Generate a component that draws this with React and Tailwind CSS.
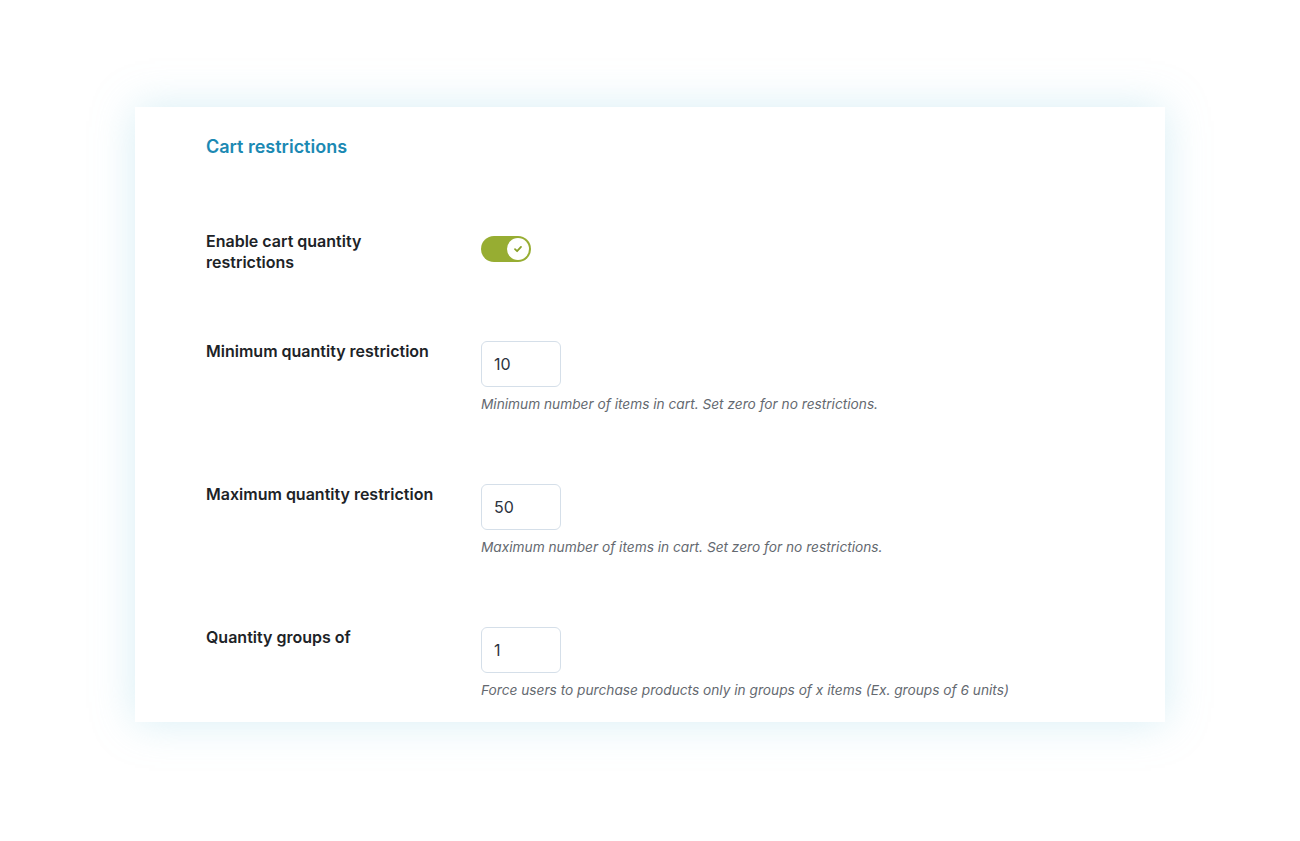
import React from "react";

function Toggle() {
  return (
    <div className="relative mt-[5px] h-[26px] w-[50px] rounded-full bg-[#97ad32]">
      <div className="absolute right-[2px] top-[2px] flex h-[22px] w-[22px] items-center justify-center rounded-full bg-white">
        <svg width="10" height="10" viewBox="0 0 10 10" fill="none">
          <path d="M2 5.2 L4.1 7.2 L8 2.9" stroke="#8aa12a" strokeWidth="1.8" strokeLinecap="round" strokeLinejoin="round" />
        </svg>
      </div>
    </div>
  );
}

function NumberRow({ label, value, help, className }) {
  return (
    <div className={"grid grid-cols-[275px_1fr] " + className}>
      <div className="text-[16px] font-semibold leading-[21px] text-[#1d2327]">{label}</div>
      <div className="flex flex-col items-start">
        <div className="flex h-[46px] w-[80px] items-center rounded-[6px] border border-[#d5dfe9] bg-white px-[12px] text-[16px] text-[#2c3340]">
          {value}
        </div>
        <div className="mt-[8px] text-[13.7px] italic leading-[18px] text-[#646970]">{help}</div>
      </div>
    </div>
  );
}

export default function App() {
  return (
    <div className="min-h-[841px] w-full bg-white pt-[107px]" style={{ fontFamily: "Inter, 'Noto Sans', sans-serif" }}>
      <div className="mx-[135px] h-[615px] bg-white px-[71px] pt-[28px] shadow-[0_0_40px_rgba(140,205,225,0.35)]">
        <h2 className="text-[18px] font-semibold leading-[24px] text-[#1b89b3]">Cart restrictions</h2>
        <div className="mt-[72px] grid grid-cols-[275px_1fr]">
          <div className="text-[16px] font-semibold leading-[21px] text-[#1d2327]">
            Enable cart quantity
            <br />
            restrictions
          </div>
          <div>
            <Toggle />
          </div>
        </div>
        <NumberRow
          className="mt-[68px]"
          label="Minimum quantity restriction"
          value="10"
          help="Minimum number of items in cart. Set zero for no restrictions."
        />
        <NumberRow
          className="mt-[71px]"
          label="Maximum quantity restriction"
          value="50"
          help="Maximum number of items in cart. Set zero for no restrictions."
        />
        <NumberRow
          className="mt-[71px]"
          label="Quantity groups of"
          value="1"
          help="Force users to purchase products only in groups of x items (Ex. groups of 6 units)"
        />
      </div>
    </div>
  );
}
